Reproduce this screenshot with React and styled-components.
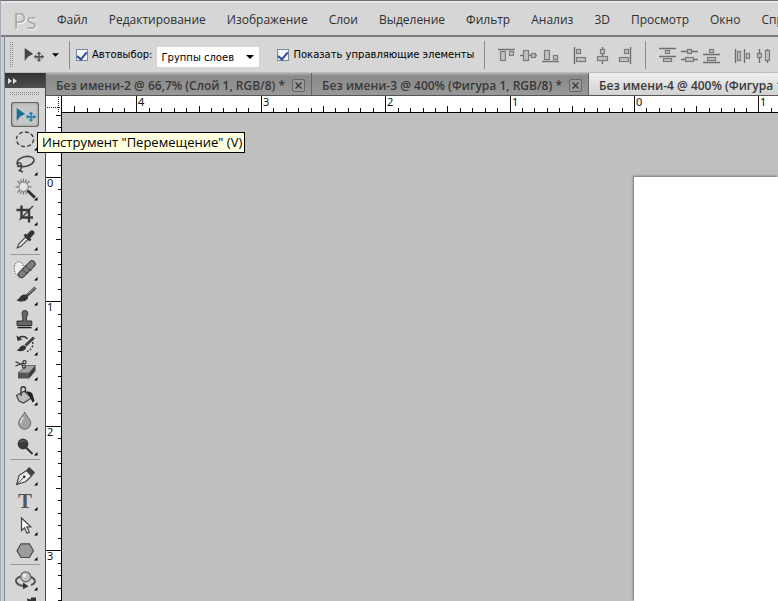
import React, { useEffect, useState } from 'react';
import styled, { createGlobalStyle, css } from 'styled-components';

const GlobalStyle = createGlobalStyle`
  * {
    box-sizing: border-box;
  }

  body {
    margin: 0;
    overflow: hidden;
    font-family: 'Open Sans', 'Noto Sans', sans-serif;
    font-size: 12px;
    color: #222;
  }

  button, select, input {
    font-family: inherit;
    margin: 0;
  }
`;

const Window = styled.div`
  display: flex;
  flex-direction: column;
  height: 100vh;
  background-color: #d6d6d6;
  border-top: 1px solid #756d75;
  border-left: 1px solid #a3abb8;
  box-shadow: inset 0 2px 0 #e6e6e9;
  overflow: hidden;
`;

const MenuBar = styled.nav`
  display: flex;
  flex: none;
  align-items: center;
  height: 36px;
  padding: 3px 0 0 12px;
  border-bottom: 2px solid #7d7d7d;
  white-space: nowrap;
`;

const Logo = styled.span`
  flex: none;
  width: 44px;
  font-family: 'Open Sans', sans-serif;
  font-size: 22px;
  line-height: 24px;
  color: #a9a9a9;
  text-shadow: 1px 1px 0 #f4f4f4;
`;

const MenuItem = styled.button`
  flex: none;
  padding: 0;
  margin-right: 21px;
  border: none;
  background: none;
  font-size: 12px;
  line-height: 20px;
  color: #2e2e2e;
`;

const Frame = styled.div`
  display: flex;
  flex: 1;
  flex-direction: column;
  min-height: 0;
  border-left: 3px solid #c9d0dc;
  box-shadow: inset 1px 0 0 #85878c;
  padding-left: 1px;
`;

const OptionsBar = styled.div`
  display: flex;
  flex: none;
  align-items: center;
  height: 36px;
  padding: 1px 0 0 5px;
  border-bottom: 1px solid #bdbdbd;
  white-space: nowrap;
`;

const Grip = styled.div`
  flex: none;
  background:
    repeating-linear-gradient(90deg, transparent 0 1px, #d6d6d6 1px 2px),
    repeating-linear-gradient(180deg, #8a8a8a 0 1px, #d6d6d6 1px 2px);
  ${({ $vertical }) => $vertical
    ? css`width: 4px; height: 26px;`
    : css`width: 30px; height: 4px; margin: 4px 5px 6px;`}
`;

const PresetButton = styled.button`
  display: flex;
  flex: none;
  align-items: center;
  gap: 7px;
  padding: 0;
  margin: 0 10px 0 9px;
  border: none;
  background: none;
`;

const Divider = styled.span`
  flex: none;
  width: 1px;
  height: 28px;
  margin: 0 6px 0 0;
  background-color: #8a8a8a;
`;

const AlignDivider = styled(Divider)`
  margin: 0 3px 0 9px;
`;

const CheckLabel = styled.label`
  display: flex;
  flex: none;
  align-items: center;
  gap: 4px;
  font-family: 'DejaVu Sans', sans-serif;
  font-size: 10px;
  line-height: 16px;
  color: #000;
`;

const CheckBox = styled.input`
  appearance: none;
  display: grid;
  place-items: center;
  width: 12px;
  height: 12px;
  border: 1px solid #7b8796;
  background-color: #f4f6f8;

  &:checked::after {
    content: '';
    width: 4px;
    height: 8px;
    border: solid #2f4a9c;
    border-width: 0 2px 2px 0;
    transform: rotate(40deg);
  }
`;

const SelectBox = styled.span`
  display: grid;
  flex: none;
  align-items: center;
  width: 102px;
  margin: 4px 18px 0 5px;

  > * {
    grid-area: 1 / 1;
  }

  svg {
    justify-self: end;
    margin-right: 5px;
    pointer-events: none;
  }
`;

const Select = styled.select`
  appearance: none;
  width: 100%;
  height: 20px;
  padding: 0 4px;
  border: none;
  border-radius: 0;
  background-color: #fff;
  font-family: 'DejaVu Sans', sans-serif;
  font-size: 10px;
  color: #000;
`;

const AlignGroup = styled.div`
  display: flex;
  flex: none;
  margin-left: 8px;
`;

const AlignButton = styled.button`
  display: grid;
  place-items: center;
  width: 22px;
  height: 22px;
  padding: 0;
  border: none;
  background: none;
`;

const Body = styled.div`
  display: flex;
  flex: 1;
  min-height: 0;
`;

const ToolPanel = styled.aside`
  flex: none;
  width: 41px;
  border-right: 1px solid #4a4a4a;
  background-color: #d6d6d6;
`;

const PanelHeader = styled.button`
  display: flex;
  align-items: center;
  width: 100%;
  height: 15px;
  padding: 0 3px;
  border: none;
  background: linear-gradient(#333, #4e4e4e);
`;

const ToolList = styled.div`
  display: flex;
  flex-direction: column;
  align-items: center;
`;

const ToolSlot = styled.div`
  position: relative;
  height: 25px;
`;

const ToolButton = styled.button`
  display: block;
  width: 28px;
  height: 25px;
  padding: 0;
  border: none;
  border-radius: 3px;
  background-color: transparent;
  ${({ $active }) => $active && css`
    background-color: #c6c6c6;
    box-shadow: inset 0 0 0 1px #646464, inset 0 0 3px 1px #8c8c8c;
  `}

  svg {
    display: block;
  }
`;

const ToolDivider = styled.div`
  width: 30px;
  height: 5px;
  border-top: 2px solid transparent;
  border-bottom: 2px solid transparent;
  background: #999 content-box;
`;

const ToolTip = styled.div`
  position: absolute;
  top: 30px;
  left: 26px;
  z-index: 2;
  padding: 0 2px 0 4px;
  border: 1px solid #000;
  background-color: #ffffe1;
  font-size: 13px;
  line-height: 19px;
  color: #000;
  white-space: nowrap;
`;

const Workspace = styled.main`
  display: flex;
  flex: 1;
  flex-direction: column;
  min-width: 0;
`;

const TabBar = styled.div`
  display: flex;
  flex: none;
  height: 23px;
  background: linear-gradient(#b0b0b0 0, #8a8a8a 3px, #989898);
  border-bottom: 1px solid #555;
  overflow: hidden;
`;

const Tab = styled.div`
  display: flex;
  flex: none;
  align-items: center;
  gap: 7px;
  padding: 3px 6px 0 10px;
  border-right: 1px solid #666;
  background: ${({ $active }) => ($active ? 'linear-gradient(#eee, #d2d2d2)' : 'transparent')};
`;

const TabTitle = styled.button`
  padding: 0;
  border: none;
  background: none;
  font-size: 12px;
  font-weight: 600;
  line-height: 16px;
  color: #383838;
  white-space: nowrap;
`;

const CloseButton = styled.button`
  display: grid;
  place-items: center;
  width: 13px;
  height: 13px;
  padding: 0;
  border: 1px solid #666;
  border-radius: 2px;
  background-color: #999;
`;

const RulerGrid = styled.div`
  display: grid;
  flex: 1;
  grid-template: 17px minmax(0, 1fr) / 16px minmax(0, 1fr);
  min-height: 0;
`;

const RulerSvg = styled.svg`
  display: block;
  width: 100%;
  height: 100%;
  background-color: #fff;
  overflow: visible;

  text {
    font-family: 'Noto Sans', sans-serif;
    font-size: 11px;
    fill: #111;
  }
`;

const Canvas = styled.div`
  display: flex;
  padding: 64px 0 0 572px;
  background-color: #bfbfbf;
  min-height: 0;
`;

const Artboard = styled.div`
  flex: 1;
  background-color: #fff;
  box-shadow: -1px -1px 2px #777;
`;

const menuItems = ['Файл', 'Редактирование', 'Изображение', 'Слои', 'Выделение', 'Фильтр', 'Анализ', '3D', 'Просмотр', 'Окно', 'Справка'];

const documents = [
  'Без имени-2 @ 66,7% (Слой 1, RGB/8) *',
  'Без имени-3 @ 400% (Фигура 1, RGB/8) *',
  'Без имени-4 @ 400% (Фигура 1, RGB/8) *',
];

// Pixels per ruler unit
const UNIT = 124.4;

function MoveGlyph({ color, cross }) {
  return (
    <>
      <path d="M5.7 6v13l3.5-4.4 5-2.6z" fill={color} />
      <path
        d="M20 9.5l2.4 2.6h-1.6v1.8h1.8v-1.6l2.6 2.5-2.6 2.5v-1.6h-1.8v1.8h1.6L20 20.1l-2.4-2.6h1.6v-1.8h-1.8v1.6l-2.6-2.5 2.6-2.5v1.6h1.8v-1.8h-1.6z"
        fill={cross}
      />
    </>
  );
}

const tools = [
  {
    name: 'Перемещение',
    noMore: true,
    icon: <MoveGlyph color="#176f96" cross="#2b83ab" />,
  },
  {
    name: 'Овальная область',
    icon: <ellipse cx="14" cy="12.3" rx="8.6" ry="7.3" fill="none" stroke="#444" strokeWidth="1.4" strokeDasharray="4 2.2" />,
  },
  {
    name: 'Лассо',
    icon: (
      <g fill="none" stroke="#444" strokeWidth="1.6">
        <ellipse cx="14.5" cy="9.5" rx="8.7" ry="4.8" transform="rotate(-14 14.5 9.5)" />
        <path d="M6 12c0-2 4-1.5 4.4.4.4 1.8-3 2.8-4.2 1.3M9.5 14.5c2 1 .5 3-1 4l3.5 1.5" />
      </g>
    ),
  },
  {
    name: 'Волшебная палочка',
    icon: (
      <>
        <path d="M12.5 1.5v16M4.5 9.8h16M6.5 4l12 11.5M18.5 4l-12 11.5M9.5 2.5l6 14.5M15.5 2.5L9.5 17" stroke="#777" strokeWidth="1.2" />
        <circle cx="12.5" cy="9.8" r="4.6" fill="#e4e4e4" stroke="#8a8a8a" />
        <path d="M16.5 13.5l7.5 7.2" stroke="#333" strokeWidth="2.8" />
      </>
    ),
  },
  {
    name: 'Рамка',
    icon: (
      <g fill="none" stroke="#3a3a3a">
        <path d="M10.5 3.5v12H22M5.5 8H18v12.5" strokeWidth="2.4" />
        <path d="M8.5 18L22 4" strokeWidth="1.2" />
      </g>
    ),
  },
  {
    name: 'Пипетка',
    icon: (
      <>
        <path d="M6.3 20.7l1.4-3.7 8-8 2.3 2.3-8 8z" fill="#f2f2f2" stroke="#444" strokeWidth="1.2" />
        <path d="M13.5 7.5l6 6" stroke="#333" strokeWidth="2.6" />
        <path d="M17 10l4-4.2" stroke="#333" strokeWidth="5" strokeLinecap="round" />
      </>
    ),
  },
  {
    divider: true,
    name: 'Восстанавливающая кисть',
    icon: (
      <>
        <ellipse cx="8" cy="11.5" rx="4.8" ry="6.8" fill="#eee" stroke="#222" strokeDasharray="1 1.5" />
        <path d="M10.5 17.5L21 7" stroke="#444" strokeWidth="7.4" strokeLinecap="round" />
        <path d="M10.5 17.5L21 7" stroke="#808080" strokeWidth="5.2" strokeLinecap="round" />
        <path d="M11 11.5c1.5 3 3.5 4.5 6 5M14.5 8.5c1.5 3 3.5 4.3 6 5" stroke="#444" fill="none" />
      </>
    ),
  },
  {
    name: 'Кисть',
    icon: (
      <>
        <path d="M16 13.5l8.5-7.8" stroke="#444" strokeWidth="3" />
        <path d="M17 12l7-6.3" stroke="#aaa" strokeWidth="1" />
        <path d="M5.3 18c3 0 3-4.5 7.5-5.5 3-.6 5.5 2 3.7 4.5-2.2 3-8 3.3-11.2 1z" fill="#333" />
      </>
    ),
  },
  {
    name: 'Штамп',
    icon: (
      <>
        <path d="M11 6.5a2.9 2.9 0 0 1 5.8 0c0 1.5-1.2 2.5-1.2 4.5v3h5.2v4.5H6V14h5.8v-3c0-2-.8-3-.8-4.5z" fill="#666" stroke="#333" />
        <path d="M6.5 20.5h14" stroke="#222" strokeWidth="1.6" />
      </>
    ),
  },
  {
    name: 'Архивная кисть',
    icon: (
      <>
        <path d="M7 6.5c3-3 7.5-2.5 9.5.5" fill="none" stroke="#333" strokeWidth="1.5" />
        <path d="M5.5 3.5l1 5.5 5-1.5z" fill="#333" />
        <path d="M14.5 13.5L23 5.5" stroke="#444" strokeWidth="3" />
        <path d="M5.5 18c3 0 3-4 6-4.5 3-.5 4.5 1.5 3 3.5-2 2.5-6 3-9 1z" fill="#333" />
        <path d="M21.5 10c1.5 4-1.5 8-5.5 9.5" fill="none" stroke="#333" strokeWidth="1.3" strokeDasharray="2 1.5" />
      </>
    ),
  },
  {
    name: 'Ластик',
    icon: (
      <>
        <path d="M7 16l8.5-7.5h9L18 16z" fill="#a5a5a5" stroke="#555" strokeWidth=".8" />
        <path d="M7 16h11v5.5H7z" fill="#555" />
        <path d="M18 16l6.5-7.5V14L18 21.5z" fill="#3c3c3c" />
        <g fill="none" stroke="#333" strokeWidth="1.2">
          <path d="M4.5 4.5l7.5 4M4.5 9L12 6" />
          <circle cx="13.5" cy="5.2" r="1.6" />
          <circle cx="13" cy="9.6" r="1.6" />
        </g>
      </>
    ),
  },
  {
    name: 'Заливка',
    icon: (
      <>
        <path d="M5.5 13.5l8-4.5 7 7-8 5-4.5-2z" fill="#bcbcbc" stroke="#444" strokeWidth="1.2" />
        <path d="M10 14V7c0-3 4.5-3 4.5 0v4" fill="none" stroke="#333" strokeWidth="1.3" />
        <path d="M15 9.5c4-.5 6.5 1 7 4l1.5 5.5-2 1.5-2.5-5.5z" fill="#222" />
      </>
    ),
  },
  {
    name: 'Размытие',
    icon: (
      <>
        <path d="M13.7 5c1.5 4 6 7 6 11.2a6 6 0 0 1-12 0c0-4.2 4.5-7.2 6-11.2z" fill="#a2a2a2" stroke="#666" />
        <path d="M12.5 10c-1.5 2-3 4-2.8 6.5" fill="none" stroke="#ddd" strokeWidth="1.5" />
      </>
    ),
  },
  {
    name: 'Осветлитель',
    icon: (
      <>
        <path d="M14 14.5l7.5 7.5" stroke="#333" strokeWidth="2" />
        <circle cx="12" cy="12" r="5.4" fill="#3a3a3a" />
        <path d="M9 10c1.5-1.5 4-1.5 5.5-.5" fill="none" stroke="#777" />
      </>
    ),
  },
  {
    divider: true,
    name: 'Перо',
    icon: (
      <>
        <path d="M5.7 22.5l2.3-9 7.5-5 5 5.5-5.5 5.5z" fill="#ededed" stroke="#444" strokeWidth="1.2" />
        <path d="M5.7 22.5l7-7" stroke="#444" />
        <circle cx="13.2" cy="14.8" r="1.4" fill="#333" />
        <path d="M16 8l2-2.5 5.5 5-2.5 3z" fill="#444" stroke="#333" />
      </>
    ),
  },
  {
    name: 'Горизонтальный текст',
    icon: <text x="14" y="21" textAnchor="middle" fontFamily="Liberation Serif, serif" fontSize="21" fontWeight="bold" fill="#555">T</text>,
  },
  {
    name: 'Выделение контура',
    icon: <path d="M10.5 6v12.5l3-2.8 2.5 5.5 2.3-1-2.5-5.4h4z" fill="#fafafa" stroke="#444" strokeWidth="1.2" />,
  },
  {
    name: 'Многоугольник',
    icon: <path d="M10 6.8h8.4l4 6.9-4 6.8H10l-4-6.8z" fill="#9c9c9c" stroke="#4a4a4a" strokeWidth="1.2" />,
  },
  {
    divider: true,
    name: 'Поворот 3D-объекта',
    icon: (
      <>
        <path d="M10 9.5c-8 2-6 8.5 3 9.5M19 9.5c5 2 6 4.5 4 7-1 1-2 1.3-3 1.5" fill="none" stroke="#555" strokeWidth="2" />
        <path d="M12 15.5l5.5 3.8-5.5 3z" fill="#333" />
        <circle cx="14.7" cy="9.8" r="5" fill="#c4c4c4" stroke="#666" strokeWidth="1.2" />
        <circle cx="13.5" cy="8.5" r="1.8" fill="#f2f2f2" />
      </>
    ),
  },
  {
    name: 'Вращение 3D-камеры',
    icon: <path d="M16 6.5l4 1v-2h5V12h-8z" fill="#333" />,
  },
];

// Each icon: guide line path plus the boxes [x, y, width, height] aligned to it
const alignGroups = [
  [
    { name: 'Выровнять верхние края', line: 'M1 3.5h17', boxes: [[3, 5, 6, 10], [12, 5, 5, 5]] },
    { name: 'Выровнять центры по вертикали', line: 'M1 9.5h17', boxes: [[4, 4, 6, 11], [12, 7, 5, 5]] },
    { name: 'Выровнять нижние края', line: 'M1 15.5h17', boxes: [[3, 4, 6, 10], [12, 9, 5, 5]] },
  ],
  [
    { name: 'Выровнять левые края', line: 'M3.5 1v17', boxes: [[5, 3, 5, 5], [5, 11, 10, 5]] },
    { name: 'Выровнять центры по горизонтали', line: 'M9.5 1v17', boxes: [[7, 3, 5, 5], [4, 10, 11, 5]] },
    { name: 'Выровнять правые края', line: 'M15.5 1v17', boxes: [[9, 3, 5, 5], [4, 11, 10, 5]] },
  ],
  [
    { name: 'Распределить верхние края', line: 'M1 2.5h17M1 10.5h17', boxes: [[7, 4, 5, 4], [5, 12, 9, 4]] },
    { name: 'Распределить центры по вертикали', line: 'M1 5.5h17M1 13.5h17', boxes: [[7, 3, 5, 5], [5, 11, 9, 5]] },
    { name: 'Распределить нижние края', line: 'M1 8.5h17M1 16.5h17', boxes: [[7, 3, 5, 4], [5, 11, 9, 4]] },
  ],
  [
    { name: 'Распределить левые края', line: 'M3.5 3v14M12.5 3v14', boxes: [[5, 5, 4, 10], [14, 7, 4, 6]] },
    { name: 'Распределить центры по горизонтали', line: 'M5.5 3v14M13.5 3v14', boxes: [[3, 7, 5, 5], [11, 4, 5, 11]] },
  ],
];

function AlignIcon({ line, boxes }) {
  return (
    <svg width="19" height="19" viewBox="0 0 19 19">
      <path d={line} stroke="#6e6e6e" strokeWidth="1.4" />
      {boxes.map(([x, y, w, h]) => (
        <rect key={`${x}-${y}`} x={x + 0.5} y={y + 0.5} width={w - 1} height={h - 1} fill="#c0c0c0" stroke="#7a7a7a" strokeWidth="1.2" />
      ))}
    </svg>
  );
}

function Caret({ width = 7 }) {
  return (
    <svg width={width} height="4" viewBox="0 0 8 4">
      <path d="M0 0h8L4 4z" fill="#000" />
    </svg>
  );
}

function Ruler({ vertical, origin, length }) {
  const ticks = [];
  const labels = [];
  const first = Math.ceil((-origin / UNIT) * 10);
  const last = Math.floor(((length - origin) / UNIT) * 10);

  for (let i = first; i <= last; i++) {
    const pos = Math.round(origin + (i * UNIT) / 10);
    const size = i % 10 === 0 ? 16 : i % 5 === 0 ? 6 : 4;
    ticks.push(vertical ? `M${16 - size} ${pos + 0.5}H16` : `M${pos + 0.5} ${16 - size}V16`);
    if (i % 10 === 0) {
      labels.push({ n: Math.abs(i / 10), pos });
    }
  }

  return (
    <RulerSvg aria-hidden="true">
      <path d={ticks.join('')} stroke="#111" />
      <path d={vertical ? `M15.5 0V${length}` : `M0 16.5H${length}`} stroke="#000" />
      {labels.map(({ n, pos }) => (
        <text key={pos} x={vertical ? 1 : pos + 2} y={vertical ? pos + 10 : 10}>{n}</text>
      ))}
    </RulerSvg>
  );
}

function App() {
  const [activeTool, setActiveTool] = useState('Перемещение');
  const [activeDoc, setActiveDoc] = useState(2);
  const [autoSelect, setAutoSelect] = useState(true);
  const [showControls, setShowControls] = useState(true);
  const [size, setSize] = useState({ width: window.innerWidth, height: window.innerHeight });

  // The rulers are redrawn when the window changes size
  useEffect(() => {
    const handleResize = () => setSize({ width: window.innerWidth, height: window.innerHeight });
    window.addEventListener('resize', handleResize);
    return () => window.removeEventListener('resize', handleResize);
  }, []);

  return (
    <>
      <GlobalStyle />
      <Window>
        <MenuBar>
          <Logo>Ps</Logo>
          {menuItems.map((item) => (
            <MenuItem key={item} type="button">{item}</MenuItem>
          ))}
        </MenuBar>

        <Frame>
          <OptionsBar>
            <Grip $vertical />
            <PresetButton type="button" aria-label="Набор параметров">
              <svg width="22" height="22" viewBox="4 2 22 22">
                <MoveGlyph color="#444" cross="#555" />
              </svg>
              <Caret />
            </PresetButton>
            <Divider />
            <CheckLabel htmlFor="auto-select">
              <CheckBox id="auto-select" type="checkbox" checked={autoSelect} onChange={(e) => setAutoSelect(e.target.checked)} />
              Автовыбор:
            </CheckLabel>
            <SelectBox>
              <Select aria-label="Автовыбор">
                <option>Группы слоев</option>
                <option>Слой</option>
              </Select>
              <Caret width={8} />
            </SelectBox>
            <CheckLabel htmlFor="show-controls">
              <CheckBox id="show-controls" type="checkbox" checked={showControls} onChange={(e) => setShowControls(e.target.checked)} />
              Показать управляющие элементы
            </CheckLabel>
            {alignGroups.map((group, index) => (
              <React.Fragment key={group[0].name}>
                {index % 2 === 0 && <AlignDivider />}
                <AlignGroup>
                  {group.map(({ name, line, boxes }) => (
                    <AlignButton key={name} type="button" aria-label={name}>
                      <AlignIcon line={line} boxes={boxes} />
                    </AlignButton>
                  ))}
                </AlignGroup>
              </React.Fragment>
            ))}
          </OptionsBar>

          <Body>
            <ToolPanel>
              <PanelHeader type="button" aria-label="Развернуть панель">
                <svg width="10" height="6" viewBox="0 0 10 6">
                  <path d="M0 0l4 3-4 3zM5 0l4 3-4 3z" fill="#ddd" />
                </svg>
              </PanelHeader>
              <Grip />
              <ToolList>
                {tools.map(({ name, icon, divider, noMore }) => (
                  <React.Fragment key={name}>
                    {divider && <ToolDivider />}
                    <ToolSlot>
                      <ToolButton
                        type="button"
                        aria-label={name}
                        $active={name === activeTool}
                        onClick={() => setActiveTool(name)}
                      >
                        <svg width="28" height="25" viewBox="0 0 28 25" fill="none">
                          {icon}
                          {!noMore && <path d="M26.5 20v3.5H23z" fill="#000" />}
                        </svg>
                      </ToolButton>
                      {name === 'Перемещение' && <ToolTip>Инструмент "Перемещение" (V)</ToolTip>}
                    </ToolSlot>
                  </React.Fragment>
                ))}
              </ToolList>
            </ToolPanel>

            <Workspace>
              <TabBar>
                {documents.map((title, index) => (
                  <Tab key={title} $active={index === activeDoc}>
                    <TabTitle type="button" onClick={() => setActiveDoc(index)}>{title}</TabTitle>
                    <CloseButton type="button" aria-label="Закрыть">
                      <svg width="9" height="9" viewBox="0 0 9 9">
                        <path d="M1.5 1.5l6 6M7.5 1.5l-6 6" stroke="#333" strokeWidth="1.2" />
                      </svg>
                    </CloseButton>
                  </Tab>
                ))}
              </TabBar>
              <RulerGrid>
                <svg width="16" height="17" viewBox="0 0 16 17">
                  <path d="M0 0h16v17H0z" fill="#fff" />
                  <path d="M12.5 1v16M1 11.5h14" stroke="#222" strokeDasharray="1 1" />
                  <path d="M15.5 0v17" stroke="#000" />
                </svg>
                <Ruler origin={572} length={size.width - 62} />
                <Ruler vertical origin={64} length={size.height - 113} />
                <Canvas>
                  <Artboard />
                </Canvas>
              </RulerGrid>
            </Workspace>
          </Body>
        </Frame>
      </Window>
    </>
  );
}

export default App;
